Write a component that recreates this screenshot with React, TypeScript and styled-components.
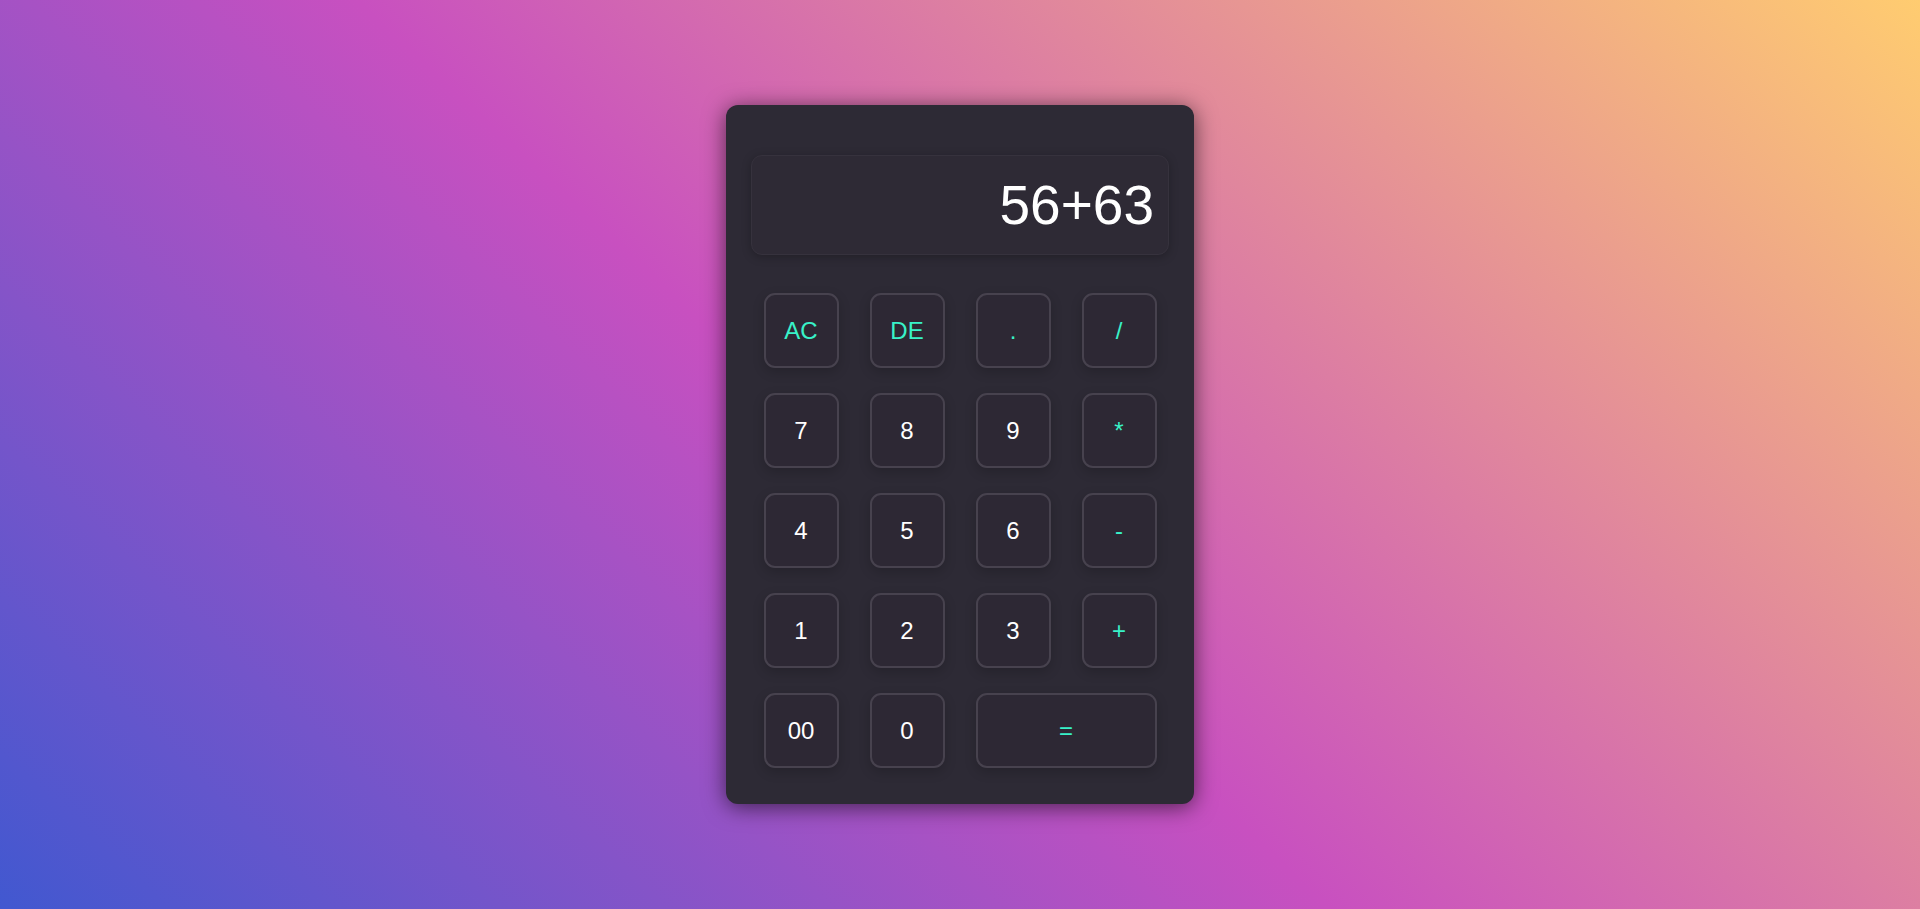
import React, { useState } from 'react';
import styled, { createGlobalStyle } from 'styled-components';

const GlobalStyle = createGlobalStyle`
  * {
    box-sizing: border-box;
  }
  body {
    margin: 0;
    font-family: 'Liberation Sans', Arial, sans-serif;
  }
`;

const Page = styled.div`
  width: 100%;
  height: 100vh;
  display: flex;
  justify-content: center;
  align-items: center;
  background-image: linear-gradient(43deg, #4158d0 0%, #c850c0 46%, #ffcc70 100%);
`;

const Calculator = styled.div`
  width: 468px;
  padding: 50px 25px 36px;
  background-color: #2d2a35;
  border-radius: 12px;
  box-shadow: 0 3px 22px rgba(0, 0, 0, 0.6);
`;

const Display = styled.div`
  height: 100px;
  display: flex;
  align-items: center;
  justify-content: flex-end;
  padding: 0 14px;
  background-color: #2e2a35;
  border: 1px solid #36323d;
  border-radius: 11px;
  box-shadow: 0 2px 10px rgba(0, 0, 0, 0.25);
  color: #ffffff;
  font-size: 55px;
  overflow: hidden;
`;

const Keys = styled.div`
  margin-top: 38px;
  display: grid;
  grid-template-columns: repeat(4, 75px);
  grid-auto-rows: 75px;
  column-gap: 31px;
  row-gap: 25px;
  justify-content: center;
`;

const Key = styled.button<{ $op?: boolean; $wide?: boolean }>`
  grid-column: ${(props) => (props.$wide ? 'span 2' : 'auto')};
  display: flex;
  align-items: center;
  justify-content: center;
  background-color: #2d2834;
  border: 2px solid #47424e;
  border-radius: 11px;
  box-shadow: 0 4px 12px rgba(0, 0, 0, 0.18);
  color: ${(props) => (props.$op ? '#38f2c8' : '#ffffff')};
  font-family: 'Liberation Sans', Arial, sans-serif;
  font-size: 24px;
  cursor: pointer;
  padding: 0;
`;

const keys: { label: string; op?: boolean; wide?: boolean }[] = [
  { label: 'AC', op: true },
  { label: 'DE', op: true },
  { label: '.', op: true },
  { label: '/', op: true },
  { label: '7' },
  { label: '8' },
  { label: '9' },
  { label: '*', op: true },
  { label: '4' },
  { label: '5' },
  { label: '6' },
  { label: '-', op: true },
  { label: '1' },
  { label: '2' },
  { label: '3' },
  { label: '+', op: true },
  { label: '00' },
  { label: '0' },
  { label: '=', op: true, wide: true },
];

function App() {
  const [value, setValue] = useState('56+63');

  const onPress = (label: string) => {
    if (label === 'AC') return setValue('');
    if (label === 'DE') return setValue((v) => v.slice(0, -1));
    if (label === '=') {
      try {
        // eslint-disable-next-line no-new-func
        const result = Function(`return (${value})`)();
        setValue(String(result));
      } catch {
        setValue('Error');
      }
      return;
    }
    setValue((v) => v + label);
  };

  return (
    <>
      <GlobalStyle />
      <Page>
        <Calculator>
          <Display>{value}</Display>
          <Keys>
            {keys.map((k) => (
              <Key key={k.label} $op={k.op} $wide={k.wide} onClick={() => onPress(k.label)}>
                {k.label}
              </Key>
            ))}
          </Keys>
        </Calculator>
      </Page>
    </>
  );
}

export default App;
